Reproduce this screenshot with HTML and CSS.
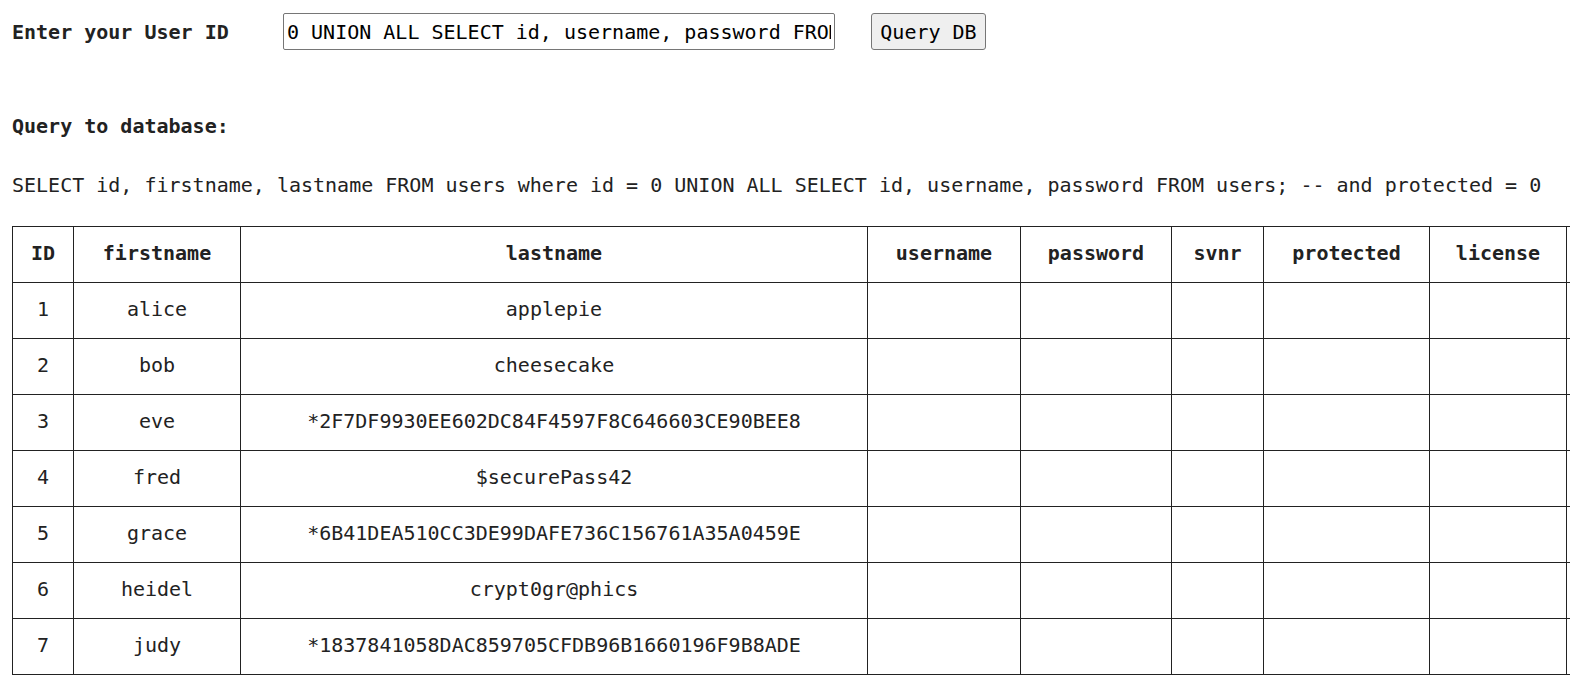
FILE: index.html
```html
<!DOCTYPE html>
<html>
<head>
<meta charset="utf-8">
<link rel="stylesheet" href="styles.css">
</head>
<body>
<form class="query-form">
  <label class="label" for="uid">Enter your User ID</label>
  <input class="uid-input" id="uid" type="text" value="0 UNION ALL SELECT id, username, password FROM users; --">
  <button class="submit" type="button">Query DB</button>
</form>
<h2 class="heading">Query to database:</h2>
<p class="sql">SELECT id, firstname, lastname FROM users where id = 0 UNION ALL SELECT id, username, password FROM users; -- and protected = 0</p>
<table class="results">
  <colgroup>
    <col class="c-id"><col class="c-first"><col class="c-last"><col class="c-user"><col class="c-pass"><col class="c-svnr"><col class="c-prot"><col class="c-lic"><col class="c-extra">
  </colgroup>
  <thead>
    <tr><th>ID</th><th>firstname</th><th>lastname</th><th>username</th><th>password</th><th>svnr</th><th>protected</th><th>license</th><th></th></tr>
  </thead>
  <tbody>
    <tr><td>1</td><td>alice</td><td>applepie</td><td></td><td></td><td></td><td></td><td></td><td></td></tr>
    <tr><td>2</td><td>bob</td><td>cheesecake</td><td></td><td></td><td></td><td></td><td></td><td></td></tr>
    <tr><td>3</td><td>eve</td><td>*2F7DF9930EE602DC84F4597F8C646603CE90BEE8</td><td></td><td></td><td></td><td></td><td></td><td></td></tr>
    <tr><td>4</td><td>fred</td><td>$securePass42</td><td></td><td></td><td></td><td></td><td></td><td></td></tr>
    <tr><td>5</td><td>grace</td><td>*6B41DEA510CC3DE99DAFE736C156761A35A0459E</td><td></td><td></td><td></td><td></td><td></td><td></td></tr>
    <tr><td>6</td><td>heidel</td><td>crypt0gr@phics</td><td></td><td></td><td></td><td></td><td></td><td></td></tr>
    <tr><td>7</td><td>judy</td><td>*1837841058DAC859705CFDB96B1660196F9B8ADE</td><td></td><td></td><td></td><td></td><td></td><td></td></tr>
  </tbody>
</table>
</body>
</html>
```
FILE: styles.css
```css
html {
  overflow: hidden;
}
body {
  margin: 0;
  padding: 0 0 0 12px;
  font-family: "DejaVu Sans Mono", "Liberation Mono", monospace;
  font-size: 20px;
  color: #222;
  background: #fff;
}
.query-form {
  display: flex;
  align-items: center;
  margin: 13px 0 0;
  height: 37px;
}
.label {
  width: 271px;
  flex: none;
  font-weight: bold;
}
.uid-input {
  box-sizing: border-box;
  flex: none;
  width: 552px;
  height: 37px;
  padding: 0 3px;
  border: 1px solid #767676;
  border-radius: 2px;
  font-family: inherit;
  font-size: 20px;
  color: #000;
  background: #fff;
}
.submit {
  box-sizing: border-box;
  flex: none;
  margin-left: 36px;
  width: 115px;
  height: 37px;
  padding: 0;
  border: 1px solid #767676;
  border-radius: 3px;
  background: #efefef;
  font-family: inherit;
  font-size: 20px;
  color: #000;
}
.heading {
  margin: 64px 0 0;
  font-size: 20px;
  line-height: 24px;
  font-weight: bold;
}
.sql {
  margin: 35px 0 0;
  line-height: 24px;
  white-space: nowrap;
}
.results {
  margin-top: 29px;
  border-collapse: collapse;
  table-layout: fixed;
  width: 1703px;
}
.results th,
.results td {
  border: 1px solid #222;
  height: 51px;
  padding: 0 0 4px;
  text-align: center;
  white-space: nowrap;
  overflow: hidden;
}
.results th {
  font-weight: bold;
}
.c-id { width: 61px; }
.c-first { width: 167px; }
.c-last { width: 627px; }
.c-user { width: 153px; }
.c-pass { width: 151px; }
.c-svnr { width: 92px; }
.c-prot { width: 166px; }
.c-lic { width: 137px; }
.c-extra { width: 150px; }
```
